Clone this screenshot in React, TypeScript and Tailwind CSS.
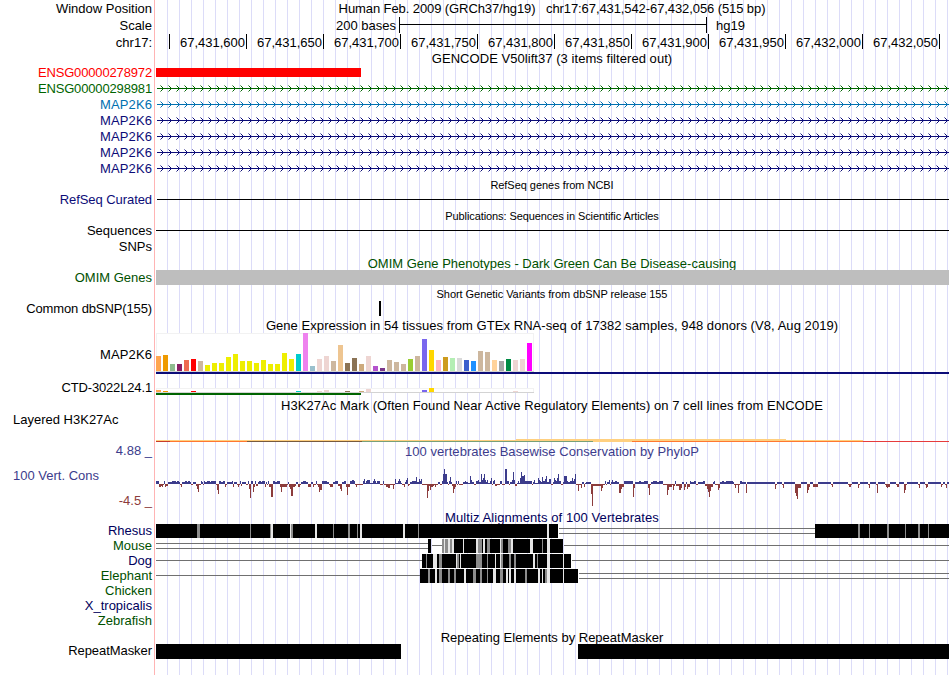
import type { ReactNode } from "react";

const LEFT = 155;
const WIDTH = 795;

type Rect = [x: number, y: number, w: number, h: number, fill: string];

/* An svg strip whose user units are page pixels, starting at the given y. */
function Strip({ y, h, children }: { y: number; h: number; children?: ReactNode }) {
  return (
    <svg className="block shrink-0" width={WIDTH} height={h} viewBox={`${LEFT} ${y} ${WIDTH} ${h}`} shapeRendering="crispEdges">
      {children}
    </svg>
  );
}

function Rects({ items }: { items: Rect[] }) {
  return (
    <>
      {items.map(([x, y, w, h, fill], i) => (
        <rect key={i} x={x} y={y} width={w} height={h} fill={fill} />
      ))}
    </>
  );
}

interface RowProps {
  h: string;
  label?: string;
  labelClass?: string;
  children?: ReactNode;
}

function Row({ h, label, labelClass = "pt-px", children }: RowProps) {
  return (
    <div className={`flex ${h}`}>
      <div className={`w-[155px] shrink-0 pr-[3px] text-right leading-4 ${labelClass}`}>{label}</div>
      {children}
    </div>
  );
}

function Title({ h, className = "", children }: { h: string; className?: string; children: ReactNode }) {
  return (
    <div className={`ml-[155px] w-[794px] text-center leading-4 ${h} ${className}`}>
      <span>{children}</span>
    </div>
  );
}

function Gene({ y, color }: { y: number; color: string }) {
  const arrows = Array.from({ length: 99 }, (_, i) => 160 + i * 8);
  const c = y + 8;
  return (
    <Strip y={y} h={16}>
      <rect x={157} y={c} width={792} height={1} fill={color} />
      {arrows.map((x) => (
        <g key={x} fill={color}>
          <rect x={x} y={c - 3} width={1} height={1} opacity={0.5} />
          <rect x={x + 1} y={c - 2} width={1} height={1} />
          <rect x={x + 2} y={c - 1} width={1} height={1} />
          <rect x={x + 2} y={c + 1} width={1} height={1} />
          <rect x={x + 1} y={c + 2} width={1} height={1} />
          <rect x={x} y={c + 3} width={1} height={1} opacity={0.5} />
        </g>
      ))}
    </Strip>
  );
}

const genes = [
  { y: 80, name: "ENSG00000298981", color: "#006400", cls: "pt-px text-[#006400] tracking-[-0.15px]" },
  { y: 96, name: "MAP2K6", color: "#0070b0", cls: "pt-px text-[#0070b0] tracking-[0.1px]" },
  { y: 112, name: "MAP2K6", color: "#0c0c78", cls: "pt-px text-[#0c0c78] tracking-[0.1px]" },
  { y: 128, name: "MAP2K6", color: "#0c0c78", cls: "pt-px text-[#0c0c78] tracking-[0.1px]" },
  { y: 144, name: "MAP2K6", color: "#0c0c78", cls: "pt-px text-[#0c0c78] tracking-[0.1px]" },
  { y: 160, name: "MAP2K6", color: "#0c0c78", cls: "pt-px text-[#0c0c78] tracking-[0.1px]" },
];

const positions = [
  "67,431,600", "67,431,650", "67,431,700", "67,431,750", "67,431,800",
  "67,431,850", "67,431,900", "67,431,950", "67,432,000", "67,432,050",
];

/* Height and colour of each of the 54 tissues. */
const tissues: [number, string][] = [
  [15, "#ffa54f"], [16, "#ee9a00"], [7, "#8fbc8f"], [7, "#8b1c62"], [11, "#ee6a50"], [12, "#ff0000"],
  [10, "#cdb79e"], [6, "#eeee00"], [8, "#eeee00"], [8, "#eeee00"], [14, "#eeee00"], [17, "#eeee00"],
  [10, "#eeee00"], [10, "#eeee00"], [8, "#eeee00"], [11, "#eeee00"], [7, "#eeee00"], [7, "#eeee00"],
  [18, "#eeee00"], [12, "#eeee00"], [17, "#00cdcd"], [38, "#ee82ee"], [5, "#9ac0cd"], [12, "#eed5d2"],
  [15, "#eed5d2"], [10, "#cdb79e"], [26, "#eec591"], [8, "#8b7355"], [13, "#8b7355"], [7, "#cdaa7d"],
  [15, "#eed5d2"], [5, "#b452cd"], [3, "#7a378b"], [11, "#cdb79e"], [9, "#cdb79e"], [7, "#cdb79e"],
  [12, "#9acd32"], [15, "#cdb79e"], [32, "#7a67ee"], [21, "#ffd700"], [11, "#ffb6c1"], [14, "#cd9b1d"],
  [13, "#b4eeb4"], [13, "#d9d9d9"], [11, "#3a5fcd"], [10, "#1e90ff"], [20, "#cdb79e"], [19, "#cdb79e"],
  [11, "#ffd39b"], [10, "#a6a6a6"], [12, "#008b45"], [11, "#eed5d2"], [12, "#eed5d2"], [28, "#ff00ff"],
];
const faintTissues: [number, number][] = [
  [0, 2], [1, 1], [5, 1], [20, 1], [23, 1], [24, 2], [27, 1], [29, 1], [30, 3], [38, 2], [39, 4], [51, 1],
];

/* Conservation profile: each value holds from its x up to the next entry. */
const cons: [number, number][] = [
  [156, 3], [159, -3], [161, -2], [162, -3], [163, -1], [164, 3], [165, -3], [166, -2], [168, 2], [172, 3], [176, 2], [177, 3],
  [179, 2], [180, -1], [181, -3], [182, 2], [185, 3], [187, 2], [188, 3], [190, 2], [191, -1], [193, 2], [196, -2], [197, -5],
  [198, -8], [199, -1], [201, 3], [202, 2], [203, -1], [204, 3], [205, 2], [207, 3], [210, 2], [211, 3], [216, -1], [217, -6],
  [218, -10], [219, 3], [221, 2], [223, 3], [225, -3], [226, -1], [227, 2], [232, 3], [233, -3], [234, 2], [237, -1], [238, -3],
  [239, -1], [240, 3], [241, -2], [242, 2], [246, -1], [248, 3], [249, -5], [250, -14], [251, 3], [253, -8], [254, -3], [255, 3],
  [256, -2], [258, 2], [259, 3], [261, 2], [262, 3], [265, -3], [266, 2], [267, -1], [268, 3], [269, -3], [271, -13], [273, 3],
  [275, 2], [277, 3], [280, -3], [281, -8], [282, -3], [287, -1], [288, 2], [289, -3], [290, -5], [291, -12], [293, -3], [295, -2],
  [296, 2], [298, -3], [300, -1], [301, 2], [303, 3], [306, 2], [308, -3], [311, 2], [313, -3], [314, -1], [316, 3], [317, -1],
  [318, -3], [319, -8], [320, -6], [322, 3], [327, 2], [329, -1], [330, -3], [333, 2], [335, 3], [338, -2], [340, -5], [341, -7],
  [342, 2], [344, 3], [346, -3], [347, -11],
  [348, -3], [350, 3], [352, 4], [354, 3], [355, -1], [356, -3], [357, -1], [363, 3], [364, 5], [365, 1], [366, 3], [367, 4],
  [370, 1], [373, 3], [374, 5], [375, 3], [376, 1], [377, 3], [380, -1], [383, 3], [384, -1], [386, -3], [388, -4], [390, -1],
  [393, -5], [394, -1], [395, 5], [396, 1], [398, 3], [399, 5], [400, 3], [401, 1], [402, -1], [404, -3], [405, 2], [406, 4],
  [407, 6], [408, -2], [409, -1], [410, 2], [412, 3], [415, 3], [416, 7], [417, 2], [419, 5], [420, 3], [421, 5], [422, -1],
  [427, -14], [428, -7], [429, -2], [430, -6], [431, -3], [433, -2], [434, -1], [435, -3], [436, -1], [438, 2], [440, -1], [442, 3],
  [443, 10], [444, 15], [445, 10], [447, 2], [448, -1], [449, 3], [450, 7], [451, 2], [452, -2], [453, -9], [454, -5], [455, -3],
  [456, 3], [457, -1], [458, 3], [459, -1], [463, 2], [465, 3], [466, 2], [468, 1], [470, 8], [471, 4], [472, 2], [474, -1],
  [476, 3], [478, 4], [479, 2], [481, 10], [482, 4], [483, 6], [484, 10], [485, 4], [486, 2], [487, 4], [488, 1], [490, 3],
  [491, 6], [492, -1], [493, 3], [494, 4], [495, -2], [497, -1], [500, 3], [502, -1], [505, 15], [507, 3], [509, -1], [510, 2],
  [512, 4], [513, 12], [514, 4], [515, -2], [517, 1], [518, 3], [519, 1], [520, 6], [521, 12], [522, 8], [524, 9], [525, 3],
  [532, -1], [533, 2], [534, 4], [535, 1], [538, 6], [539, 4], [540, 3], [541, 2], [542, 7], [543, 3], [545, 5], [546, 8],
  [547, 2], [549, 5], [551, -1], [553, 2], [554, 6], [555, 4], [556, 3], [557, 6], [558, 10], [559, 3], [561, -1], [563, 2],
  [564, 8], [567, 3], [568, 2], [570, 3], [572, 6], [573, 3], [574, 5], [575, 10], [576, -1], [578, -7], [579, -1], [581, -4],
  [582, 2], [584, -3], [585, 1], [586, 2], [591, -10], [592, -22], [593, -2], [601, -7], [602, -4], [603, -1], [605, 3], [606, -1],
  [607, 2], [609, 4], [610, -1], [611, 2], [612, 4], [613, 2], [615, 3], [617, 2], [619, -9], [621, -5], [622, -3], [624, 3],
  [633, -13], [634, -4], [635, 2], [639, 3], [641, 2], [644, 3], [648, -4], [649, -11], [650, -1], [651, 2], [653, 3], [657, 2],
  [659, 3], [663, -1], [667, -11], [668, -6], [669, -3], [672, -1], [673, -6], [674, -2], [675, 3], [676, -2], [679, -6], [681, -4],
  [682, 2], [684, -6], [685, -3], [686, 2], [687, -5], [688, -3], [690, 3], [691, 2], [694, 3], [696, -1], [698, 2], [703, 3],
  [705, -2], [707, -5], [708, -8], [709, -13], [710, -7], [711, -3], [713, 2], [714, 3], [715, -1], [718, -6], [719, -4], [720, 2],
  [722, 3], [724, 2], [726, 3], [733, 2], [734, -1], [735, -4], [736, -1], [738, -9], [739, -1], [740, 3], [742, 2], [746, -9],
  [747, 2], [775, -5], [776, -1], [777, 2], [782, -1], [783, -4], [784, 2], [795, -9], [796, -12], [797, -15], [798, -4], [801, 2],
  [807, -9], [808, -6], [809, -3], [810, 2], [813, -3], [818, 2], [831, -1], [832, -3], [833, 2], [848, -1], [849, -3], [851, -1],
  [852, 2], [858, -4], [859, -1], [860, 2], [868, -1], [869, -4], [870, 2], [876, -1], [877, -9], [878, 2], [885, -1], [886, -3],
  [887, -4], [888, -3], [890, 2], [896, -1], [897, -3], [899, 2], [904, -9], [905, -6], [906, -1], [907, 2], [918, -1], [919, -4],
  [920, 2], [925, -1], [926, -4], [927, -3], [928, 2], [941, -3], [942, -1], [943, 2], [945, -1], [946, -4], [947, 2], [949, 0],
];

const K = "#000000";
const G = "#8c8c8c";
const W = "#e6e6e6";
const L = "#707070";

type Stripe = [number, number, string];

const rhesus: Stripe[] = [
  [156, 402, K], [197, 3, G], [250, 1, G], [270, 1, G], [271, 2, W], [290, 1, W], [291, 2, G], [315, 2, W],
  [333, 1, G], [348, 2, G], [357, 1, G], [360, 2, W], [403, 2, W], [418, 1, G], [547, 2, W],
  [815, 134, K], [858, 2, G], [869, 1, G], [887, 2, G], [905, 1, G], [918, 2, G], [928, 1, G],
];
const mouse: Stripe[] = [
  [428, 3, K], [442, 2, G], [444, 1, W], [445, 3, G], [448, 2, W], [450, 2, G], [452, 2, W],
  [454, 109, K], [463, 1, W], [476, 2, W], [478, 4, G], [483, 2, W], [487, 3, G], [500, 1, W], [501, 2, G],
  [508, 3, G], [511, 2, W], [530, 3, W], [542, 1, G], [547, 3, W],
];
const dog: Stripe[] = [
  [422, 149, K], [426, 1, G], [433, 4, W], [439, 3, G], [456, 1, W], [457, 2, G], [460, 1, W], [476, 6, G],
  [487, 1, G], [495, 1, W], [500, 1, W], [501, 2, G], [509, 2, G], [514, 2, G], [533, 2, W], [537, 1, G], [547, 3, W], [563, 1, W],
];
const elephant: Stripe[] = [
  [420, 158, K], [428, 2, G], [435, 2, W], [439, 3, G], [448, 2, G], [454, 2, G], [464, 2, W], [473, 3, G],
  [480, 2, G], [487, 1, G], [493, 3, W], [500, 3, G], [506, 2, W], [509, 2, W], [514, 2, W], [525, 2, G],
  [538, 2, W], [542, 1, W], [545, 2, G], [547, 3, W], [563, 1, W],
];

const species: { name: string; y: number; cls: string; stripes: Stripe[]; lines: [number, number, number][] }[] = [
  { name: "Rhesus", y: 524, cls: "-mt-px text-[#00005c]", stripes: rhesus, lines: [[559, 528, 256], [559, 533, 256]] },
  { name: "Mouse", y: 539, cls: "-mt-px text-[#005000]", stripes: mouse, lines: [[156, 543, 272], [156, 548, 272], [432, 545, 10], [564, 545, 385]] },
  { name: "Dog", y: 554, cls: "-mt-px text-[#00005c]", stripes: dog, lines: [[156, 560, 266], [572, 560, 377]] },
  { name: "Elephant", y: 569, cls: "-mt-px text-[#005000]", stripes: elephant, lines: [[156, 575, 264], [579, 573, 370], [579, 578, 370]] },
  { name: "Chicken", y: 584, cls: "-mt-px text-[#005000]", stripes: [], lines: [] },
  { name: "X_tropicalis", y: 599, cls: "-mt-px text-[#00005c]", stripes: [], lines: [] },
  { name: "Zebrafish", y: 614, cls: "-mt-px text-[#005000]", stripes: [], lines: [] },
];

export default function App() {
  return (
    <div className="h-[675px] w-[950px] overflow-hidden bg-white font-['Liberation_Sans',Arial,sans-serif] text-[13px] text-black">
      <div className="h-full w-[949px] overflow-hidden whitespace-pre bg-[linear-gradient(90deg,#ffb4b4_1px,transparent_1px),repeating-linear-gradient(90deg,transparent_0_1px,#dcdcf8_1px_2px,transparent_2px_12px)] bg-[length:1px_100%,783px_100%] bg-[position:154px_0,166px_0] bg-no-repeat">
        <Row h="h-[17px]" label="Window Position">
          <div className="w-[794px] pt-px text-center leading-4 tracking-[-0.09px]">Human Feb. 2009 (GRCh37/hg19)   chr17:67,431,542-67,432,056 (515 bp)</div>
        </Row>
        <Row h="h-4" label="Scale">
          <div className="w-[241px] pt-px text-right leading-4">200 bases</div>
          <svg className="ml-[3px] block" width="309" height="16" shapeRendering="crispEdges">
            <Rects items={[[0, 0, 1, 16, K], [307, 0, 1, 16, K], [0, 7, 308, 1, K]]} />
          </svg>
          <div className="ml-2 pt-px leading-4">hg19</div>
        </Row>
        <Row h="h-[17px]" label="chr17:" labelClass="pt-[2px]">
          <div className="mt-px h-[15px] w-[15px] border-r border-black" />
          {positions.map((p) => (
            <div key={p} className="mt-px h-[15px] w-[77px] border-r border-black pt-px pr-px text-right leading-4">{p}</div>
          ))}
        </Row>
        <Title h="h-[14px]" className="pt-px tracking-[0.05px]">GENCODE V50lift37 (3 items filtered out)</Title>

        <Row h="h-4" label="ENSG00000278972" labelClass="pt-px text-[#ff0000] tracking-[-0.15px]">
          <Strip y={64} h={16}>
            <rect x={156} y={68} width={205} height={9} fill="#ff0000" />
          </Strip>
        </Row>
        {genes.map((g) => (
          <Row key={g.y} h="h-4" label={g.name} labelClass={g.cls}>
            <Gene y={g.y} color={g.color} />
          </Row>
        ))}

        <Title h="h-[15px]" className="pt-px text-[11px] tracking-[-0.04px]">RefSeq genes from NCBI</Title>
        <Row h="h-4" label="RefSeq Curated" labelClass="pt-px text-[#0c0c78] tracking-[-0.07px]">
          <Strip y={191} h={16}><rect x={157} y={199} width={792} height={1} fill={K} /></Strip>
        </Row>
        <Title h="h-[15px]" className="pt-px text-[11px] tracking-[-0.09px]">Publications: Sequences in Scientific Articles</Title>
        <Row h="h-4" label="Sequences">
          <Strip y={222} h={16}><rect x={156} y={230} width={793} height={1} fill={K} /></Strip>
        </Row>
        <Row h="h-[17px]" label="SNPs" />
        <Title h="h-[14px]" className="pt-px text-[#005000]">OMIM Gene Phenotypes - Dark Green Can Be Disease-causing</Title>
        <Row h="h-4" label="OMIM Genes" labelClass="pt-px text-[#005000]">
          <Strip y={269} h={16}><rect x={156} y={270} width={793} height={15} fill="#bebebe" /></Strip>
        </Row>
        <Title h="h-[15px]" className="pt-px text-[11px] tracking-[-0.05px]">Short Genetic Variants from dbSNP release 155</Title>
        <Row h="h-[17px]" label="Common dbSNP(155)" labelClass="pt-px tracking-[-0.12px]">
          <Strip y={300} h={17}><rect x={379} y={301} width={2} height={15} fill={K} /></Strip>
        </Row>
        <Title h="h-[16px]" className="pt-px tracking-[0.055px]">Gene Expression in 54 tissues from GTEx RNA-seq of 17382 samples, 948 donors (V8, Aug 2019)</Title>

        <Row h="h-[47px]" label="MAP2K6" labelClass="pt-[14px] tracking-[0.1px]">
          <Strip y={333} h={47}>
            <rect x={156} y={333} width={378} height={38} fill="#f2f2f2" />
            <rect x={157} y={334} width={376} height={37} fill="#ffffff" />
            <rect x={156} y={371} width={378} height={1} fill="#d3d3d3" />
            {tissues.map(([h, fill], i) => (
              <rect key={i} x={156 + i * 7} y={371 - h} width={5} height={h} fill={fill} />
            ))}
            <rect x={156} y={372} width={793} height={2} fill="#0c0c78" />
          </Strip>
        </Row>
        <Row h="h-[18px]" label="CTD-3022L24.1" labelClass="tracking-[-0.15px]">
          <Strip y={380} h={18}>
            <rect x={156} y={388} width={378} height={4} fill="#f2f2f2" />
            <rect x={157} y={389} width={376} height={3} fill="#ffffff" />
            <rect x={156} y={392} width={378} height={1} fill="#d3d3d3" />
            {faintTissues.map(([i, h]) => (
              <rect key={i} x={156 + i * 7} y={392 - h} width={5} height={h} fill={tissues[i][1]} />
            ))}
            <rect x={156} y={393} width={205} height={2} fill="#006400" />
          </Strip>
        </Row>

        <Title h="h-[14px]" className="tracking-[0.05px]">H3K27Ac Mark (Often Found Near Active Regulatory Elements) on 7 cell lines from ENCODE</Title>
        <div className="flex h-[31px]">
          <div className="w-[155px] shrink-0 pl-[13px] leading-4">Layered H3K27Ac</div>
          <Strip y={412} h={31}>
            <Rects
              items={[
                [156, 440, 707, 1, "#ffd080"], [516, 439, 270, 1, "#ffd080"],
                [156, 441, 14, 1, "#c83c28"], [170, 441, 77, 1, "#ff7830"], [247, 441, 115, 1, "#785a3c"],
                [362, 441, 231, 1, "#78a078"], [593, 441, 39, 1, "#ffd080"], [632, 441, 231, 1, "#ff7830"], [863, 441, 86, 1, "#e63c3c"],
              ]}
            />
          </Strip>
        </div>
        <Row h="h-[24px]" label="4.88 _" labelClass="text-[#3c3c8c]">
          <div className="w-[794px] pt-px text-center leading-4 tracking-[0.04px] text-[#3c3c8c]">100 vertebrates Basewise Conservation by PhyloP</div>
        </Row>
        <div className="flex h-[43px]">
          <div className="flex w-[155px] shrink-0 flex-col gap-[9px] pt-px leading-4">
            <div className="pl-[13px] text-[#3c3c8c]">100 Vert. Cons</div>
            <div className="pr-[3px] text-right text-[#8c3c3c]">-4.5 _</div>
          </div>
          <Strip y={467} h={43}>
            {cons.slice(0, -1).map(([x, v], i) => {
              const w = cons[i + 1][0] - x;
              return (
                <rect key={x} x={x} y={v > 0 ? 484 - v : 484} width={w} height={Math.abs(v)} fill={v > 0 ? "#3c3c8c" : "#8c3c3c"} />
              );
            })}
          </Strip>
        </div>

        <Title h="h-[14px]" className="tracking-[0.08px] text-[#00005c]">Multiz Alignments of 100 Vertebrates</Title>
        {species.map((s) => (
          <Row key={s.name} h="h-[15px]" label={s.name} labelClass={s.cls}>
            <Strip y={s.y} h={15}>
              {s.lines.map(([x, y, w], i) => (
                <rect key={i} x={x} y={y} width={w} height={1} fill={L} />
              ))}
              {s.stripes.map(([x, w, fill], i) => (
                <rect key={i} x={x} y={s.y} width={w} height={14} fill={fill} />
              ))}
            </Strip>
          </Row>
        ))}
        <Title h="h-[15px]" className="pt-px">Repeating Elements by RepeatMasker</Title>
        <Row h="h-4" label="RepeatMasker" labelClass="-mt-px tracking-[-0.06px]">
          <Strip y={644} h={16}>
            <Rects items={[[156, 644, 245, 15, K], [578, 644, 371, 15, K]]} />
          </Strip>
        </Row>
      </div>
    </div>
  );
}
